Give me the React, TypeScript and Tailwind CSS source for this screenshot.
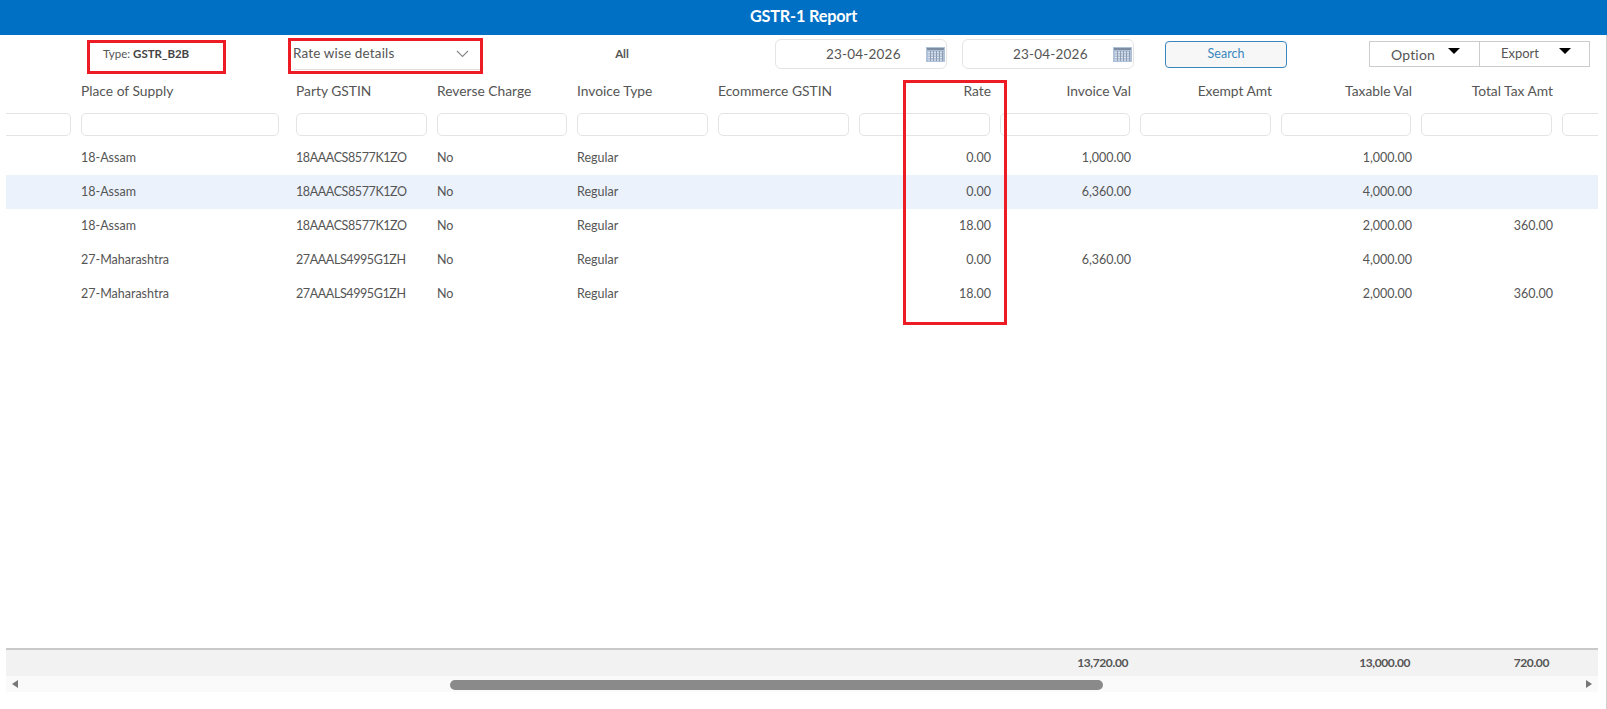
const cols = "grid grid-cols-[75px_215px_141px_140px_141px_141px_141px_140px_141px_140px_141px_100px]";

const headers = ["", "Place of Supply", "Party GSTIN", "Reverse Charge", "Invoice Type", "Ecommerce GSTIN", "Rate", "Invoice Val", "Exempt Amt", "Taxable Val", "Total Tax Amt", ""];
const rightFrom = 6;

const rows = [
  ["18-Assam", "18AAACS8577K1ZO", "No", "Regular", "", "0.00", "1,000.00", "", "1,000.00", ""],
  ["18-Assam", "18AAACS8577K1ZO", "No", "Regular", "", "0.00", "6,360.00", "", "4,000.00", ""],
  ["18-Assam", "18AAACS8577K1ZO", "No", "Regular", "", "18.00", "", "", "2,000.00", "360.00"],
  ["27-Maharashtra", "27AAALS4995G1ZH", "No", "Regular", "", "0.00", "6,360.00", "", "4,000.00", ""],
  ["27-Maharashtra", "27AAALS4995G1ZH", "No", "Regular", "", "18.00", "", "", "2,000.00", "360.00"],
];

function CalendarIcon() {
  return (
    <svg width="19" height="15" viewBox="0 0 19 15" className="shrink-0">
      <rect width="19" height="15" fill="#afc1d8" />
      <rect x="1" y="1" width="17" height="2" fill="#7d8ca1" />
      {[5, 7.5, 10, 12.5].map((y) => (
        <rect key={y} x="2" y={y} width="15" height="1" fill="#dfe5ec" />
      ))}
      {[4, 7, 10, 13, 16].map((x) => (
        <rect key={x} x={x} y="4" width="1" height="10" fill="#8c9bb0" />
      ))}
    </svg>
  );
}

function DateBox({ className }: { className: string }) {
  return (
    <div className={`flex h-[30px] w-[172px] items-center rounded-[6px] border border-[#e4e4e4] pl-[50px] pr-[1px] text-[13.5px] tracking-[0.2px] text-[#555] ${className}`}>
      <span className="flex-1">23-04-2026</span>
      <CalendarIcon />
    </div>
  );
}

function Caret() {
  return <span className="mb-[6px] h-0 w-0 border-x-[6px] border-t-[6px] border-x-transparent border-t-black" />;
}

function FilterCell({ index }: { index: number }) {
  if (index === 0) {
    return (
      <div className="flex justify-end pr-[10px]">
        <div className="h-[23px] w-[66px] rounded-l-none rounded-r-[5px] border border-l-0 border-[#e4e4e4]" />
      </div>
    );
  }
  return (
    <div className={index === 1 ? "pr-[17px]" : "pr-[10.5px]"}>
      <div className="h-[23px] w-full rounded-[5px] border border-[#e4e4e4] bg-white" />
    </div>
  );
}

export default function App() {
  return (
    <div className="relative flex h-[709px] w-[1607px] flex-col overflow-hidden bg-white font-['Lato','Liberation_Sans',sans-serif] text-[12.5px] text-[#555]">
      <header className="flex h-[35px] shrink-0 items-center justify-center bg-[#0070c5] pb-[3px] text-[16.3px] font-bold tracking-[-0.2px] text-white">
        GSTR-1 Report
      </header>

      <div className="flex h-[42px] shrink-0 items-center pb-[4px]">
        <div className="ml-[103px] w-[190px] text-[11.5px]">
          Type: <b className="font-bold text-[#444]">GSTR_B2B</b>
        </div>
        <div className="flex h-[32px] w-[191px] items-center justify-between rounded-[3px] border-b border-[#ddd] pr-[15px] text-[13.5px] tracking-[0.15px]">
          <span>Rate wise details</span>
          <svg width="13" height="8" viewBox="0 0 13 8" fill="none" stroke="#888" strokeWidth="1.1"><path d="M1 1l5.5 5.5L12 1" /></svg>
        </div>
        <div className="ml-[128px] w-[20px] text-center text-[11.5px] font-bold">All</div>
        <DateBox className="ml-[143px]" />
        <DateBox className="ml-[15px]" />
        <button className="ml-[31px] h-[27px] w-[122px] rounded-[4px] border border-[#3a87bd] bg-[#f7f7f7] text-[12.5px] text-[#3a87bd]">Search</button>
        <div className="ml-[82px] flex h-[26px] w-[111px] items-center justify-center gap-[13px] border border-[#ccc] pl-[2px] text-[14px] tracking-[0.2px]">
          <span>Option</span> <Caret />
        </div>
        <div className="flex h-[26px] w-[110px] items-center justify-center gap-[20px] border border-l-0 border-[#ccc] pl-[3px] text-[13px]">
          <span>Export</span> <Caret />
        </div>
      </div>

      <div className="mx-[6px] flex min-h-0 w-[1592px] flex-1 flex-col overflow-hidden">
        <div className="flex-1 overflow-hidden">
          <div className={`${cols} h-[28px] items-center text-[13.8px]`}>
            {headers.map((h, i) => (
              <div key={i} className={i >= rightFrom ? "pr-[9px] text-right" : ""}>{h}</div>
            ))}
          </div>
          <div className={`${cols} h-[36px] items-center pt-[3px]`}>
            {headers.map((_, i) => <FilterCell key={i} index={i} />)}
          </div>
          {rows.map((r, ri) => (
            <div key={ri} className={`${cols} h-[34px] items-center ${ri === 1 ? "bg-[#ebf2fc]" : ""}`}>
              <div />
              {r.map((c, i) => (
                <div key={i} className={i + 1 >= rightFrom ? "pr-[9px] text-right" : i === 1 ? "tracking-[-0.4px]" : ""}>{c}</div>
              ))}
            </div>
          ))}
        </div>

        <div className={`${cols} h-[28px] shrink-0 items-center border-t-2 border-[#c9c9c9] bg-[#f2f2f2] text-[12px] font-bold tracking-[-0.4px]`}>
          <div className="col-start-8 pr-[12px] text-right">13,720.00</div>
          <div className="col-start-10 pr-[11px] text-right">13,000.00</div>
          <div className="pr-[13px] text-right">720.00</div>
        </div>
        <div className="flex h-[16px] shrink-0 items-center bg-[#fafafa] pl-[6px] pr-[6px]">
          <span className="h-0 w-0 border-y-[4px] border-r-[6px] border-y-transparent border-r-[#777]" />
          <div className="ml-[432px] mt-[2px] h-[10px] w-[653px] rounded-[5px] bg-[#8a8a8a]" />
          <span className="ml-auto h-0 w-0 border-y-[4px] border-l-[6px] border-y-transparent border-l-[#777]" />
        </div>
        <div className="h-[17px] shrink-0" />
      </div>

      <div className="pointer-events-none absolute left-[87px] top-[40px] h-[34px] w-[139px] border-[3px] border-[#ed1c24]" />
      <div className="pointer-events-none absolute left-[288px] top-[38px] h-[36px] w-[195px] border-[3px] border-[#ed1c24]" />
      <div className="pointer-events-none absolute left-[903px] top-[80px] h-[245px] w-[104px] border-[3px] border-[#ed1c24]" />
      <div className="pointer-events-none absolute right-0 top-[35px] h-[674px] w-px bg-[#d0d0d0]" />
    </div>
  );
}
